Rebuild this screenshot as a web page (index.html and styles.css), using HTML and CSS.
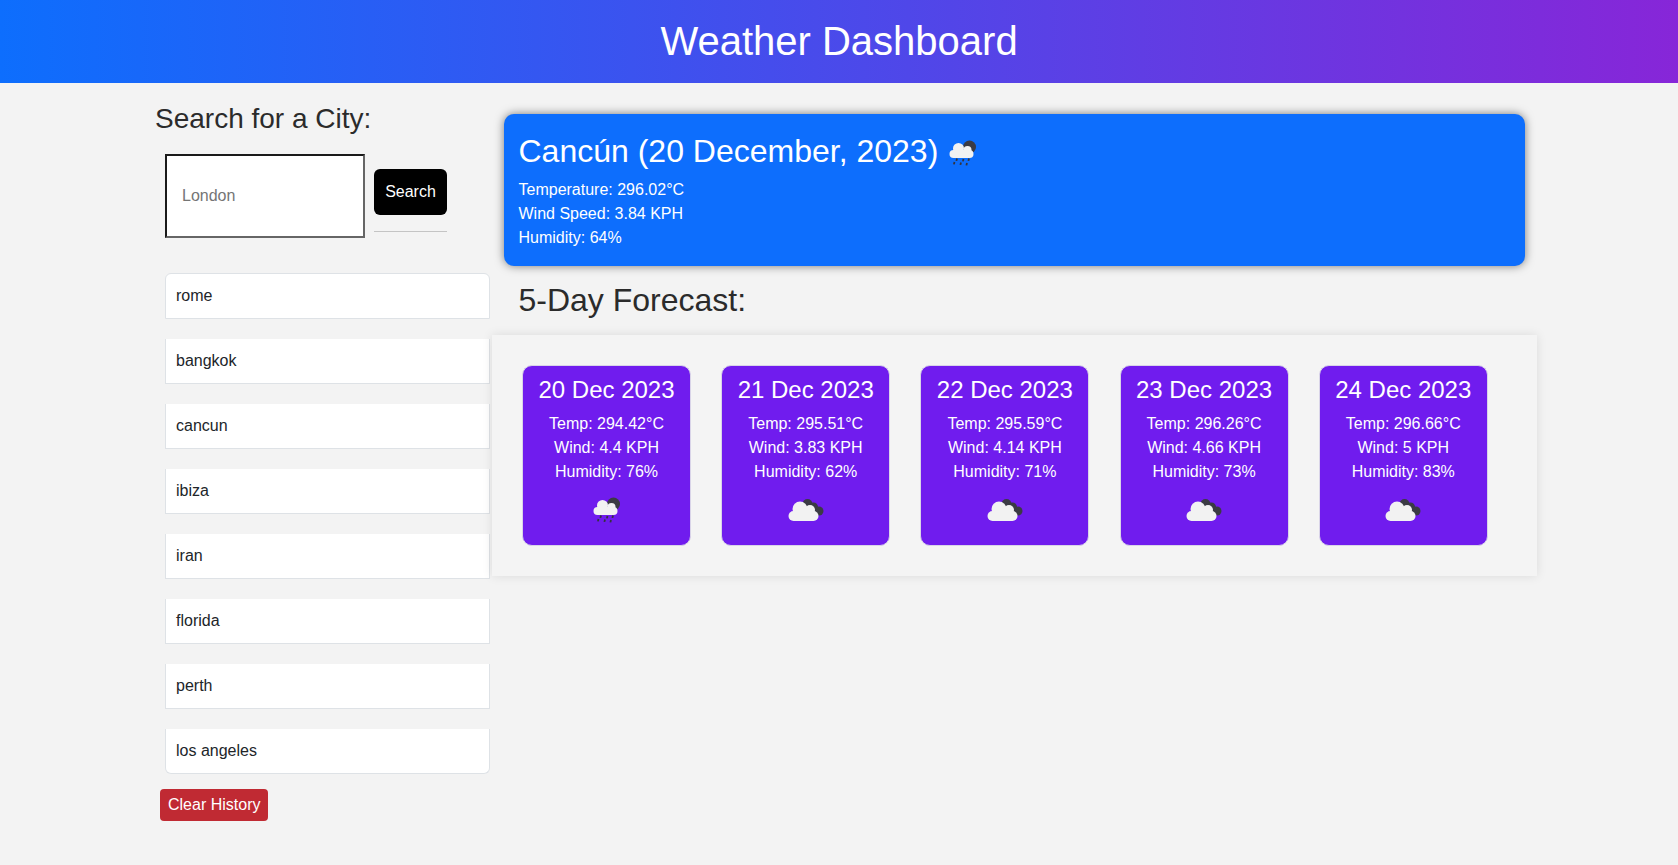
FILE: index.html
```html
<!DOCTYPE html>
<html lang="en">
<head>
    <meta charset="UTF-8">
    <meta name="viewport" content="width=device-width, initial-scale=1.0">
    <title>Weather Dashboard</title>
    <link rel="stylesheet" href="styles.css">
</head>
<body>
    <svg class="icon-defs" aria-hidden="true">
        <symbol id="icon-rain" viewBox="0 0 50 50">
            <circle cx="31.5" cy="18" r="6.5" fill="#3b3b44"/>
            <circle cx="20.5" cy="19.5" r="5.5" fill="#f2f2f2"/>
            <circle cx="29.5" cy="21" r="4" fill="#f2f2f2"/>
            <rect x="11.5" y="21" width="24" height="8" rx="4" fill="#f2f2f2"/>
            <path d="M19 29.5l-.6 2.4M25.5 30l-.6 2.4M31 29.5l-.6 2.4M16.5 33l-.6 2.4M23 33.5l-.6 2.4M29 34l-.6 2.4" stroke="#34343c" stroke-width="1.8" fill="none"/>
        </symbol>
        <symbol id="icon-cloud" viewBox="0 0 50 50">
            <circle cx="26.5" cy="18" r="5" fill="#3b3b44"/>
            <circle cx="32.5" cy="21" r="4.5" fill="#3b3b44"/>
            <circle cx="38" cy="25" r="4.5" fill="#3b3b44"/>
            <circle cx="19" cy="23" r="7.5" fill="#f2f2f2"/>
            <circle cx="29" cy="24" r="5" fill="#f2f2f2"/>
            <rect x="7.5" y="25" width="30" height="10" rx="5" fill="#f2f2f2"/>
        </symbol>
    </svg>

    <header class="site-header">
        <h1>Weather Dashboard</h1>
    </header>

    <main class="layout">
        <aside class="sidebar">
            <h3>Search for a City:</h3>
            <form class="search-form">
                <input class="search-input" type="text" placeholder="London">
                <div class="search-actions">
                    <button class="search-button" type="button">Search</button>
                    <hr>
                </div>
            </form>
            <ul class="history">
                <li>rome</li>
                <li>bangkok</li>
                <li>cancun</li>
                <li>ibiza</li>
                <li>iran</li>
                <li>florida</li>
                <li>perth</li>
                <li>los angeles</li>
            </ul>
            <button class="clear-button" type="button">Clear History</button>
        </aside>

        <section class="content">
            <div class="current">
                <h2>Cancún (20 December, 2023)<svg class="weather-icon"><use href="#icon-rain"/></svg></h2>
                <p>Temperature: 296.02°C</p>
                <p>Wind Speed: 3.84 KPH</p>
                <p>Humidity: 64%</p>
            </div>

            <h2 class="forecast-title">5-Day Forecast:</h2>

            <div class="forecast">
                <div class="day">
                    <h4>20 Dec 2023</h4>
                    <p>Temp: 294.42°C</p>
                    <p>Wind: 4.4 KPH</p>
                    <p>Humidity: 76%</p>
                    <svg class="weather-icon"><use href="#icon-rain"/></svg>
                </div>
                <div class="day">
                    <h4>21 Dec 2023</h4>
                    <p>Temp: 295.51°C</p>
                    <p>Wind: 3.83 KPH</p>
                    <p>Humidity: 62%</p>
                    <svg class="weather-icon"><use href="#icon-cloud"/></svg>
                </div>
                <div class="day">
                    <h4>22 Dec 2023</h4>
                    <p>Temp: 295.59°C</p>
                    <p>Wind: 4.14 KPH</p>
                    <p>Humidity: 71%</p>
                    <svg class="weather-icon"><use href="#icon-cloud"/></svg>
                </div>
                <div class="day">
                    <h4>23 Dec 2023</h4>
                    <p>Temp: 296.26°C</p>
                    <p>Wind: 4.66 KPH</p>
                    <p>Humidity: 73%</p>
                    <svg class="weather-icon"><use href="#icon-cloud"/></svg>
                </div>
                <div class="day">
                    <h4>24 Dec 2023</h4>
                    <p>Temp: 296.66°C</p>
                    <p>Wind: 5 KPH</p>
                    <p>Humidity: 83%</p>
                    <svg class="weather-icon"><use href="#icon-cloud"/></svg>
                </div>
            </div>
        </section>
    </main>
</body>
</html>
```

FILE: styles.css
```css
* {
    box-sizing: border-box;
}
body {
    margin: 0;
    background-color: #f3f3f3;
    color: #2b2b2b;
    font-family: "Liberation Sans", Arial, sans-serif;
    font-size: 16px;
    line-height: 24px;
}
h1, h2, h3, h4, p, ul {
    margin: 0;
    padding: 0;
    font-weight: 400;
}
.icon-defs {
    display: none;
}
.site-header {
    display: flex;
    align-items: center;
    justify-content: center;
    height: 83px;
    padding-bottom: 2px;
    background: linear-gradient(to right, #0d6efd, #8726d8);
    color: white;
}
.site-header h1 {
    font-size: 40px;
    line-height: 48px;
}
.layout {
    display: flex;
    padding-left: 155px;
}
.sidebar {
    width: 349px;
    padding-top: 19px;
}
.sidebar h3 {
    font-size: 28px;
    line-height: 34px;
}
.search-form {
    display: flex;
    gap: 9px;
    margin: 18px 0 35px 10px;
}
.search-input {
    width: 200px;
    height: 84px;
    padding: 0 15px;
    border: 2px solid;
    border-color: #1a1a1a #666 #666 #1a1a1a;
    background: white;
    font-family: inherit;
    font-size: 16px;
}
.search-input::placeholder {
    color: #757575;
}
.search-actions {
    width: 73px;
    padding-top: 15px;
}
.search-button {
    width: 100%;
    height: 46px;
    border: none;
    border-radius: 6px;
    background-color: black;
    color: white;
    font-family: inherit;
    font-size: 16px;
}
.search-actions hr {
    margin: 16px 0 0;
    border: none;
    border-top: 1px solid #c4c4c4;
}
.history {
    list-style: none;
    width: 325px;
    margin-left: 10px;
}
.history li {
    margin-bottom: 20px;
    padding: 10px;
    background-color: white;
    border: 1px solid #dee2e6;
    border-top: none;
    color: #212529;
}
.history li:first-child {
    border-top: 1px solid #dee2e6;
    border-radius: 6px 6px 0 0;
}
.history li:last-child {
    margin-bottom: 15px;
    border-radius: 0 0 6px 6px;
}
.clear-button {
    display: block;
    height: 32px;
    margin-left: 5px;
    padding: 0 8px;
    border: none;
    border-radius: 4px;
    background-color: #c02a33;
    color: white;
    font-family: inherit;
    font-size: 16px;
}
.content {
    width: 1021px;
    padding-top: 31px;
}
.current {
    height: 152px;
    padding: 15px 14.5px;
    border-radius: 10px;
    background-color: #0d6efd;
    box-shadow: 0 0 10px rgba(0,0,0,0.5);
    color: white;
}
.current h2 {
    height: 49px;
    font-size: 32px;
    line-height: 38px;
}
.weather-icon {
    width: 50px;
    height: 50px;
    vertical-align: middle;
}
.forecast-title {
    margin: 15px 0;
    padding-left: 14.5px;
    font-size: 32px;
    line-height: 39px;
}
.forecast {
    display: flex;
    gap: 30.2px;
    margin: 0 -12px;
    padding: 30px;
    background-color: #f4f4f4;
    box-shadow: 0 0 10px rgba(0,0,0,0.1);
}
.day {
    width: 169px;
    padding: 9px 8px;
    border: 1px solid #d9d4e8;
    border-radius: 10px;
    background-color: #701cee;
    color: white;
    text-align: center;
}
.day h4 {
    margin-bottom: 8px;
    font-size: 24px;
    line-height: 29px;
}
.day .weather-icon {
    display: block;
    margin: 2px auto 0;
}
```
